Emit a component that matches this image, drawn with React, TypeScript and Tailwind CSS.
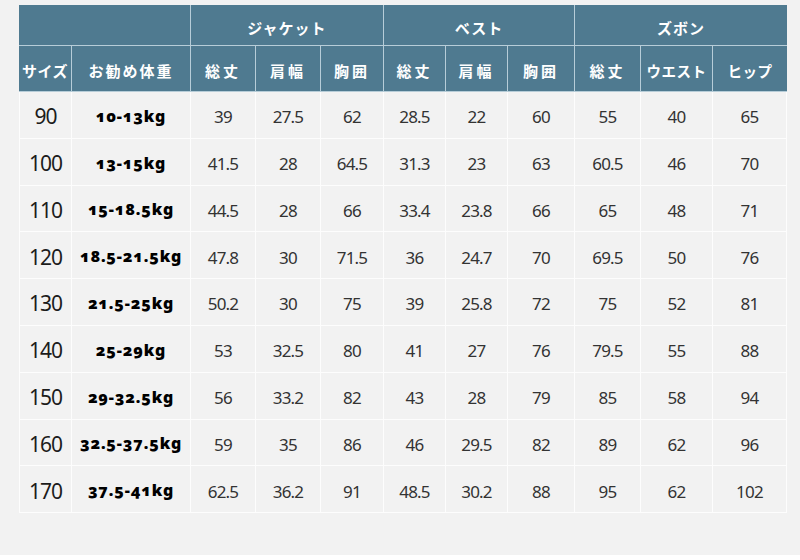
import React from "react";

const rows: [string, string, string[]][] = [
  ["90", "10-13kg", ["39", "27.5", "62", "28.5", "22", "60", "55", "40", "65"]],
  ["100", "13-15kg", ["41.5", "28", "64.5", "31.3", "23", "63", "60.5", "46", "70"]],
  ["110", "15-18.5kg", ["44.5", "28", "66", "33.4", "23.8", "66", "65", "48", "71"]],
  ["120", "18.5-21.5kg", ["47.8", "30", "71.5", "36", "24.7", "70", "69.5", "50", "76"]],
  ["130", "21.5-25kg", ["50.2", "30", "75", "39", "25.8", "72", "75", "52", "81"]],
  ["140", "25-29kg", ["53", "32.5", "80", "41", "27", "76", "79.5", "55", "88"]],
  ["150", "29-32.5kg", ["56", "33.2", "82", "43", "28", "79", "85", "58", "94"]],
  ["160", "32.5-37.5kg", ["59", "35", "86", "46", "29.5", "82", "89", "62", "96"]],
  ["170", "37.5-41kg", ["62.5", "36.2", "91", "48.5", "30.2", "88", "95", "62", "102"]],
];

const sub = ["総丈", "肩幅", "胸囲", "総丈", "肩幅", "胸囲", "総丈", "ウエスト", "ヒップ"];

const hdr =
  "flex items-center justify-center bg-[#4f7a90] text-white font-bold border-r border-b border-[#b7cdd8]";

export default function App() {
  return (
    <div className="w-[800px] h-[560px] bg-white overflow-hidden">
      <div className="h-[555px] bg-[#f2f2f2] pt-[5px] pl-[19px]">
        <div
          className="grid w-[768px] grid-cols-[53px_119px_65px_65px_63px_62px_62px_67px_66px_72px_74px] grid-rows-[41px_46px_repeat(9,46.8px)] [font-family:'Noto_Sans','Noto_Sans_CJK_JP',sans-serif]"
        >
          <div className={`${hdr} col-span-2`} />
          <div className={`${hdr} col-span-3 text-[15px] tracking-[1px] pt-1.5`}>ジャケット</div>
          <div className={`${hdr} col-span-3 text-[15px] tracking-[1px] pt-1.5`}>ベスト</div>
          <div className={`${hdr} col-span-3 text-[15px] tracking-[1px] pt-1.5 border-r-0`}>ズボン</div>

          <div className={`${hdr} text-[15px] tracking-[0.5px] pt-1.5`}>サイズ</div>
          <div className={`${hdr} text-[15px] tracking-[2px] pt-1.5`}>お勧め体重</div>
          {sub.map((s, i) => (
            <div
              key={i}
              className={`${hdr} pt-1.5 ${s.length === 2 ? "text-[15px] tracking-[3px]" : "text-[14.5px] tracking-[0.5px]"} ${i === 8 ? "border-r-0" : ""}`}
            >
              {s}
            </div>
          ))}

          {rows.map(([size, w, vals], r) => (
            <React.Fragment key={r}>
              <div className="flex items-center justify-center border-l border-r border-b border-[#fdfdfd] text-[21px] tracking-[-1px] text-[#1c1c1c] pt-1">
                {size}
              </div>
              <div className="flex items-center justify-center border-r border-b border-[#fdfdfd] text-[16px] tracking-[0.8px] font-black text-black oldstyle-nums pt-0.5 [font-family:'Noto_Sans','DejaVu_Sans',sans-serif]">
                {w}
              </div>
              {vals.map((v, i) => (
                <div
                  key={i}
                  className="flex items-center justify-center border-r border-b border-[#fdfdfd] text-[17px] tracking-[-0.8px] text-[#333] pt-1"
                >
                  {v}
                </div>
              ))}
            </React.Fragment>
          ))}
        </div>
      </div>
    </div>
  );
}
